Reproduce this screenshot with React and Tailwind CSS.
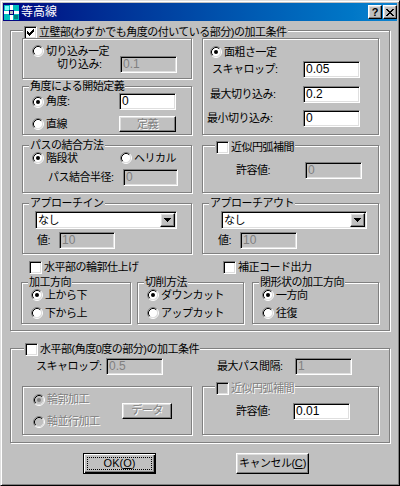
import React from "react";

const dim = "text-[#808080] [text-shadow:1px_1px_0_#fff]";
const sunken =
  "border border-t-[#808080] border-l-[#808080] border-b-white border-r-white shadow-[inset_1px_1px_0_#000,inset_-1px_-1px_0_#dfdfdf]";
const raised =
  "border border-t-white border-l-white border-b-black border-r-black shadow-[inset_-1px_-1px_0_#808080,inset_1px_1px_0_#dfdfdf]";

function Group({ title, titleClass = "left-[6px] top-[-7px]", className = "", children }) {
  return (
    <div className={`relative border border-[#808080] shadow-[inset_1px_1px_0_#fff,1px_1px_0_#fff] ${className}`}>
      {title && (
        <div className={`absolute flex h-[13px] items-center bg-[#c0c0c0] px-[1px] ${titleClass}`}>{title}</div>
      )}
      {children}
    </div>
  );
}

function Radio({ checked, disabled }) {
  return (
    <svg width="12" height="12" viewBox="0 0 12 12" className="shrink-0">
      <circle cx="6" cy="6" r="4.5" fill={disabled ? "#c0c0c0" : "#fff"} />
      <path d="M2.11 9.89A5.5 5.5 0 0 1 9.89 2.11" stroke="#808080" fill="none" />
      <path d="M9.89 2.11A5.5 5.5 0 0 1 2.11 9.89" stroke="#fff" fill="none" />
      <path d="M2.82 9.18A4.5 4.5 0 0 1 9.18 2.82" stroke="#000" fill="none" />
      <path d="M9.18 2.82A4.5 4.5 0 0 1 2.82 9.18" stroke="#dfdfdf" fill="none" />
      {checked && <circle cx="6" cy="6" r="2" fill={disabled ? "#808080" : "#000"} />}
    </svg>
  );
}

function RadioItem({ label, checked, disabled, className = "" }) {
  return (
    <div className={`flex h-[12px] items-center ${className}`}>
      <Radio checked={checked} disabled={disabled} />
      <span className={`ml-[2px] whitespace-nowrap ${disabled ? dim : ""}`}>{label}</span>
    </div>
  );
}

function Check({ checked, disabled }) {
  return (
    <span
      className={`flex h-[13px] w-[13px] shrink-0 items-center justify-center ${sunken} ${
        disabled ? "bg-[#c0c0c0]" : "bg-white"
      }`}
    >
      {checked && (
        <svg width="7" height="7" viewBox="0 0 7 7" shapeRendering="crispEdges">
          <path
            d="M0 2h1v3H0zM1 3h1v3H1zM2 4h1v3H2zM3 3h1v3H3zM4 2h1v3H4zM5 1h1v3H5zM6 0h1v3H6z"
            fill={disabled ? "#808080" : "#000"}
          />
        </svg>
      )}
    </span>
  );
}

function CheckItem({ label, checked, disabled, className = "" }) {
  return (
    <div className={`flex h-[13px] items-center ${className}`}>
      <Check checked={checked} disabled={disabled} />
      <span className={`ml-[2px] whitespace-nowrap ${disabled ? dim : ""}`}>{label}</span>
    </div>
  );
}

function Edit({ value, disabled, className = "" }) {
  return (
    <div
      className={`flex h-[17px] shrink-0 items-center pl-[2px] text-[12px] tracking-normal ${sunken} ${
        disabled ? "bg-[#c0c0c0] text-[#808080]" : "bg-white text-black"
      } ${className}`}
    >
      {value}
    </div>
  );
}

function Btn({ children, disabled, className = "" }) {
  return (
    <div className={`flex shrink-0 items-center justify-center bg-[#c0c0c0] ${raised} ${disabled ? dim : ""} ${className}`}>
      {children}
    </div>
  );
}

function Combo({ className = "" }) {
  return (
    <div className={`flex h-[18px] items-center bg-white p-[1px] ${sunken} ${className}`}>
      <span className="flex-1 pl-[1px]">なし</span>
      <span className={`flex h-full w-[15px] items-center justify-center bg-[#c0c0c0] ${raised}`}>
        <svg width="7" height="4" viewBox="0 0 7 4" shapeRendering="crispEdges">
          <path d="M0 0h7v1H0zM1 1h5v1H1zM2 2h3v1H2zM3 3h1v1H3z" fill="#000" />
        </svg>
      </span>
    </div>
  );
}

function TitleIcon() {
  return (
    <svg width="15" height="15" viewBox="0 0 15 15" shapeRendering="crispEdges" className="shrink-0">
      <rect x="0" y="0" width="15" height="15" fill="#00c0c0" />
      <rect x="6" y="0" width="3" height="15" fill="#fff" />
      <rect x="0" y="6" width="15" height="3" fill="#fff" />
      <rect x="1" y="1" width="4" height="4" fill="#80ffff" />
      <rect x="10" y="10" width="4" height="4" fill="#008080" />
      <rect x="5" y="5" width="5" height="5" fill="#000080" />
      <rect x="6" y="6" width="3" height="3" fill="#c0c0c0" />
    </svg>
  );
}

function TitleBar() {
  return (
    <div className="flex h-[18px] items-center bg-linear-to-r from-[#000080] to-[#1084d0] pl-[1px]">
      <TitleIcon />
      <span className="ml-[2px] text-[12px] tracking-normal text-white">等高線</span>
      <div className="ml-auto flex gap-[1px]">
        <Btn className="h-[14px] w-[14px] text-[11px] font-bold tracking-normal">?</Btn>
        <Btn className="h-[14px] w-[14px]">
          <svg width="8" height="7" viewBox="0 0 8 7" shapeRendering="crispEdges">
            <path
              d="M0 0h2v1H0zM6 0h2v1H6zM1 1h2v1H1zM5 1h2v1H5zM2 2h4v1H2zM3 3h2v1H3zM2 4h4v1H2zM1 5h2v1H1zM5 5h2v1H5zM0 6h2v1H0zM6 6h2v1H6z"
              fill="#000"
            />
          </svg>
        </Btn>
      </div>
    </div>
  );
}

export default function App() {
  return (
    <div className="h-[486px] w-[400px] overflow-hidden bg-[#c0c0c0]">
      <div className="flex h-[486px] w-[400px] flex-col border border-t-[#dfdfdf] border-l-[#dfdfdf] border-b-black border-r-black bg-[#c0c0c0] p-[2px] font-['Liberation_Sans','Noto_Sans_CJK_JP',sans-serif] text-[11px] leading-[13px] tracking-[-0.5px] text-black shadow-[inset_1px_1px_0_#fff,inset_-1px_-1px_0_#808080]">
        <TitleBar />

        <div className="pl-[7px] pt-[9px]">
          {/* 立壁部 */}
          <Group
            className="h-[301px] w-[380px]"
            titleClass="left-[12px] top-[-5px]"
            title={<CheckItem checked label="立壁部(わずかでも角度の付いている部分)の加工条件" />}
          >
            <div className="flex pl-[11px] pt-[7px]">
              <div className="flex w-[170px] flex-col">
                <Group className="h-[41px]">
                  <RadioItem className="ml-[9px] mt-[6px]" label="切り込み一定" />
                  <div className="-mt-px flex h-[17px] items-center pl-[34px]">
                    <span className="w-[63px]">切り込み:</span>
                    <Edit className="w-[57px]" value="0.1" disabled />
                  </div>
                </Group>

                <Group className="mt-[7px] h-[49px]" title="角度による開始定義">
                  <div className="mt-[6px] flex h-[17px] items-center pl-[9px]">
                    <RadioItem className="w-[87px]" checked label="角度:" />
                    <Edit className="w-[57px]" value="0" />
                  </div>
                  <div className="mt-[6px] flex h-[16px] items-center pl-[9px]">
                    <RadioItem className="w-[87px]" label="直線" />
                    <Btn disabled className="h-[16px] w-[57px]">定義</Btn>
                  </div>
                </Group>

                <Group className="mt-[10px] h-[48px]" title="パスの結合方法">
                  <div className="mt-[6px] flex pl-[9px]">
                    <RadioItem className="w-[88px]" checked label="階段状" />
                    <RadioItem label="ヘリカル" />
                  </div>
                  <div className="mt-[5px] flex h-[17px] items-center pl-[25px]">
                    <span className="w-[75px]">パス結合半径:</span>
                    <Edit className="w-[55px]" value="0" disabled />
                  </div>
                </Group>

                <Group className="mt-[10px] h-[51px]" title="アプローチイン">
                  <Combo className="ml-[12px] mt-[7px] w-[142px]" />
                  <div className="mt-[3px] flex h-[17px] items-center pl-[14px]">
                    <span className="w-[22px]">値:</span>
                    <Edit className="w-[56px]" value="10" disabled />
                  </div>
                </Group>
              </div>

              <div className="ml-[10px] flex w-[177px] flex-col">
                <Group className="h-[97px]">
                  <RadioItem className="ml-[7px] mt-[7px]" checked label="面粗さ一定" />
                  <div className="mt-[3px] flex h-[17px] items-center justify-between pl-[9px] pr-[18px]">
                    <span>スキャロップ:</span>
                    <Edit className="w-[57px]" value="0.05" />
                  </div>
                  <div className="mt-[8px] flex h-[17px] items-center justify-between pl-[7px] pr-[18px]">
                    <span>最大切り込み:</span>
                    <Edit className="w-[57px]" value="0.2" />
                  </div>
                  <div className="mt-[7px] flex h-[17px] items-center justify-between pl-[4px] pr-[18px]">
                    <span>最小切り込み:</span>
                    <Edit className="w-[57px]" value="0" />
                  </div>
                </Group>

                <Group
                  className="mt-[10px] h-[48px]"
                  titleClass="left-[12px] top-[-5px]"
                  title={<CheckItem label="近似円弧補間" />}
                >
                  <div className="mt-[16px] flex h-[17px] items-center pl-[33px]">
                    <span className="w-[69px]">許容値:</span>
                    <Edit className="w-[57px]" value="0" disabled />
                  </div>
                </Group>

                <Group className="mt-[10px] h-[51px]" title="アプローチアウト">
                  <Combo className="ml-[18px] mt-[7px] w-[146px]" />
                  <div className="mt-[3px] flex h-[17px] items-center pl-[15px]">
                    <span className="w-[22px]">値:</span>
                    <Edit className="w-[57px]" value="10" disabled />
                  </div>
                </Group>
              </div>
            </div>

            <div className="mt-[7px] flex pl-[18px]">
              <CheckItem className="w-[194px]" label="水平部の輪郭仕上げ" />
              <CheckItem label="補正コード出力" />
            </div>

            <div className="mt-[8px] flex pl-[10px]">
              <Group className="h-[42px] w-[110px]" title="加工方向">
                <RadioItem className="ml-[9px] mt-[6px]" checked label="上から下" />
                <RadioItem className="ml-[9px] mt-[6px]" label="下から上" />
              </Group>
              <Group className="ml-[6px] h-[42px] w-[107px]" title="切削方法">
                <RadioItem className="ml-[9px] mt-[6px]" checked label="ダウンカット" />
                <RadioItem className="ml-[9px] mt-[6px]" label="アップカット" />
              </Group>
              <Group className="ml-[8px] h-[42px] w-[127px]" title="閉形状の加工方向">
                <RadioItem className="ml-[9px] mt-[6px]" checked label="一方向" />
                <RadioItem className="ml-[9px] mt-[6px]" label="往復" />
              </Group>
            </div>
          </Group>

          {/* 水平部 */}
          <Group
            className="mt-[17px] h-[95px] w-[380px]"
            titleClass="left-[13px] top-[-6px]"
            title={<CheckItem label="水平部(角度0度の部分)の加工条件" />}
          >
            <div className="mt-[9px] flex h-[17px] items-center pl-[25px]">
              <span className="w-[70px]">スキャロップ:</span>
              <Edit className="w-[57px]" value="0.5" disabled />
              <span className="ml-[54px] w-[78px]">最大パス間隔:</span>
              <Edit className="w-[57px]" value="1" disabled />
            </div>
            <div className="mt-[11px] flex pl-[11px]">
              <Group className="flex h-[49px] w-[170px] items-center">
                <div className="flex w-[99px] flex-col gap-[10px] pl-[10px]">
                  <RadioItem checked disabled label="輪郭加工" />
                  <RadioItem disabled label="軸並行加工" />
                </div>
                <Btn disabled className="h-[16px] w-[50px]">データ</Btn>
              </Group>
              <Group
                className="ml-[10px] h-[49px] w-[177px]"
                titleClass="left-[12px] top-[-5px]"
                title={<CheckItem disabled label="近似円弧補間" />}
              >
                <div className="mt-[16px] flex h-[17px] items-center pl-[33px]">
                  <span className="w-[57px]">許容値:</span>
                  <Edit className="w-[57px]" value="0.01" />
                </div>
              </Group>
            </div>
          </Group>

          <div className="mt-[10px] flex pl-[73px]">
            <div className="flex h-[21px] w-[73px] items-center justify-center border border-black bg-[#c0c0c0] p-[3px] shadow-[inset_1px_1px_0_#fff,inset_-1px_-1px_0_#000,inset_-2px_-2px_0_#808080]">
              <div className="flex h-full w-full items-center justify-center border border-dotted border-black tracking-normal">
                OK(<u>O</u>)
              </div>
            </div>
            <Btn className="ml-[80px] h-[21px] w-[73px]">
              キャンセル(<u className="tracking-normal">C</u>)
            </Btn>
          </div>
        </div>
      </div>
    </div>
  );
}
